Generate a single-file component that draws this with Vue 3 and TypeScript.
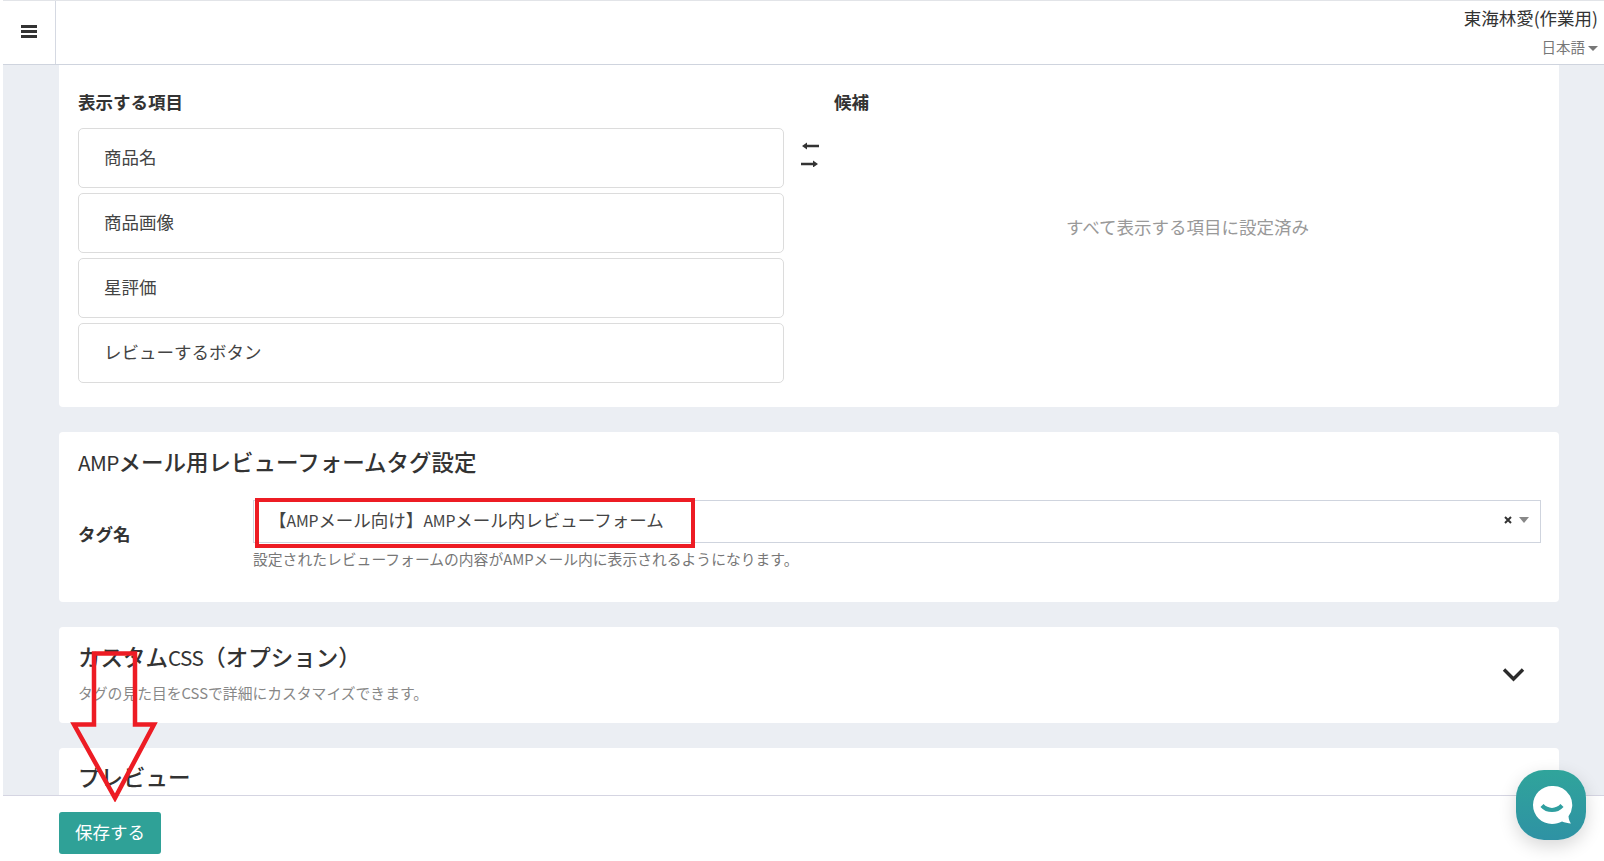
<script setup lang="ts">
const items: string[] = ['商品名', '商品画像', '星評価', 'レビューするボタン']
</script>

<template>
  <div class="page">
    <header class="topbar">
      <button class="menu" type="button" aria-label="menu">
        <svg width="16" height="13" viewBox="0 0 16 13"><path d="M0 0h16v3H0zM0 5h16v3H0zM0 10h16v3H0z" fill="#333" /></svg>
      </button>
      <div class="user">
        <div class="user-name">東海林愛(作業用)</div>
        <div class="lang">日本語<span class="caret"></span></div>
      </div>
    </header>

    <main class="content">
      <section class="card first">
        <div class="columns">
          <div>
            <h3 class="col-title">表示する項目</h3>
            <ul class="list">
              <li v-for="item in items" :key="item" class="list-item">{{ item }}</li>
            </ul>
          </div>
          <div class="swap">
            <svg width="19" height="26" viewBox="0 0 19 26">
              <path d="M18 3.800H6V1.500L1 5l5 3.500V6.200h12z" fill="#333" />
              <path d="M0 21.800h12v-2.300l5 3.500-5 3.500v-2.300H0z" fill="#333" />
            </svg>
          </div>
          <div class="candidates">
            <h3 class="col-title">候補</h3>
            <div class="empty">すべて表示する項目に設定済み</div>
          </div>
        </div>
      </section>

      <section class="card tag-card">
        <h2 class="card-title"><span class="latin-title">AMP</span>メール用レビューフォームタグ設定</h2>
        <div class="form-row">
          <label class="form-label">タグ名</label>
          <div class="form-field">
            <div class="select">
              <span class="select-value">【<span class="latin-value">AMP</span>メール向け】<span class="latin-value">AMP</span>メール内レビューフォーム</span>
              <svg class="select-clear" width="8" height="8" viewBox="0 0 8 8"><path d="M1 1l6 6M7 1L1 7" stroke="#333" stroke-width="2" /></svg>
              <span class="select-caret"></span>
            </div>
            <p class="help">設定されたレビューフォームの内容がAMPメール内に表示されるようになります。</p>
          </div>
        </div>
      </section>

      <section class="card css-card">
        <div>
          <h2 class="card-title">カスタム<span class="latin-title">CSS</span>（オプション）</h2>
          <p class="css-help">タグの見た目をCSSで詳細にカスタマイズできます。</p>
        </div>
        <svg class="chevron" width="23" height="15" viewBox="0 0 23 15">
          <path d="M2 2.500l9.500 9.500L21 2.500" fill="none" stroke="#2b2b2b" stroke-width="3.400" />
        </svg>
      </section>

      <section class="card preview-card">
        <h2 class="card-title">プレビュー</h2>
      </section>
    </main>

    <footer class="footer">
      <button class="save" type="button">保存する</button>
    </footer>

    <div class="mark-box"></div>
    <svg class="mark-arrow" width="90" height="152" viewBox="0 0 90 152">
      <path d="M25 3.500H66V74.500H85L46 148 5 74.500H25Z" fill="none" stroke="#ed1c24" stroke-width="4.500" />
    </svg>

    <div class="chat">
      <svg width="44" height="42" viewBox="0 0 44 42">
        <path d="M21 1a19 19 0 1 0 0 38c4 0 7-.9 10-2.400 2.500 1 6 1.900 9 1.900-1.500-2-2.300-4.300-2.500-7.200A19 19 0 0 0 21 1z" fill="#fff" />
        <path d="M11 20.500c5.500 6 14.500 6 20 0" fill="none" stroke="#2f9fa0" stroke-width="4.200" />
      </svg>
    </div>
  </div>
</template>

<style>
html, body { margin: 0; overflow: hidden; background: #fff; }
</style>

<style scoped>
* { box-sizing: border-box; }
.page {
  position: relative;
  height: 861px;
  display: flex;
  flex-direction: column;
  overflow: hidden;
  border-left: 3px solid #fff;
  font-family: "Noto Sans CJK JP", "Noto Sans", sans-serif;
  color: #333;
  background: #ebeef3;
}
.page::before {
  content: "";
  position: absolute;
  left: -1px;
  top: 0;
  bottom: 0;
  width: 1px;
  background: #d5d9e2;
}
.topbar {
  flex: none;
  height: 65px;
  display: flex;
  justify-content: space-between;
  background: #fff;
  border-top: 1px solid #e2e4e8;
  border-bottom: 1px solid #cfd4de;
}
.menu {
  width: 53px;
  padding: 0 0 2px;
  background: #fff;
  border: 0;
  border-right: 1px solid #d5d9e2;
  display: flex;
  align-items: center;
  justify-content: center;
}
.user {
  padding: 5px 6px 0 0;
  text-align: right;
}
.user-name { font-size: 17.500px; line-height: 24px; color: #333; }
.lang { margin-top: 7px; font-size: 14.500px; line-height: 20px; color: #777; }
.caret {
  display: inline-block;
  margin-left: 3px;
  vertical-align: 2px;
  border: 5px solid transparent;
  border-top: 5px solid #777;
  border-bottom: 0;
}
.content {
  flex: 1;
  min-height: 0;
  overflow: hidden;
  padding: 0 45px 0 56px;
  display: flex;
  flex-direction: column;
  gap: 25px;
}
.card {
  flex: none;
  background: #fff;
  border-radius: 4px;
  padding: 0 18px 0 19px;
}
.first { height: 342px; padding-top: 24px; border-radius: 0 0 4px 4px; }
.columns {
  display: grid;
  grid-template-columns: 706px 50px 707px;
}
.col-title {
  margin: 0 0 14px;
  font-size: 17.500px;
  line-height: 25px;
  font-weight: 700;
  color: #333;
}
.list { list-style: none; margin: 0; padding: 0; display: flex; flex-direction: column; gap: 5px; }
.list-item {
  height: 60px;
  padding: 0 0 4px 25px;
  display: flex;
  align-items: center;
  border: 1px solid #dcdcdc;
  border-radius: 5px;
  font-size: 17.500px;
  color: #444;
}
.swap { padding: 52px 0 0 16.500px; }
.candidates { display: flex; flex-direction: column; }
.empty {
  height: 196px;
  display: flex;
  align-items: center;
  justify-content: center;
  font-size: 17.500px;
  color: #999;
}
.tag-card { height: 170px; padding-top: 13px; }
.card-title {
  margin: 0;
  font-size: 22.500px;
  line-height: 32px;
  font-weight: 500;
  color: #333;
}
.latin-title {
  font-size: 0.92em;
  font-weight: 400;
  letter-spacing: -0.03em;
}
.latin-value {
  font-size: 0.9em;
  letter-spacing: -0.01em;
}
.form-row { display: flex; margin-top: 22px; }
.form-label {
  width: 175px;
  padding-top: 21px;
  font-size: 17.500px;
  line-height: 25px;
  font-weight: 700;
}
.form-field { flex: 1; min-width: 0; }
.select {
  height: 43px;
  display: flex;
  align-items: center;
  padding: 0 11px 4px 15px;
  border: 1px solid #cfd4de;
}
.select-value {
  flex: 1;
  font-size: 17.500px;
  color: #444;
}
.select-clear { margin-right: 7px; }
.select-caret {
  border: 5px solid transparent;
  border-top: 6px solid #888;
  border-bottom: 0;
}
.help {
  margin: 6px 0 0;
  font-size: 14.800px;
  line-height: 20px;
  color: #777;
}
.css-card {
  height: 96px;
  padding-top: 13px;
  padding-right: 34px;
  display: flex;
  justify-content: space-between;
}
.css-help {
  margin: 10px 0 0;
  font-size: 14.800px;
  line-height: 20px;
  color: #888;
}
.chevron { margin-top: 27px; }
.preview-card { height: 100px; padding-top: 12px; }
.footer {
  flex: none;
  height: 66px;
  padding: 16px 0 0 56px;
  background: #fff;
  border-top: 1px solid #d5d5e2;
}
.save {
  width: 102px;
  height: 42px;
  padding: 0 0 3px;
  border: 0;
  border-radius: 3px;
  background: #2fa197;
  color: #fff;
  font-family: inherit;
  font-size: 17.500px;
}
.mark-box {
  position: absolute;
  left: 252px;
  top: 498px;
  width: 440px;
  height: 50px;
  border: 4px solid #ed1c24;
}
.mark-arrow {
  position: absolute;
  left: 66px;
  top: 650px;
}
.chat {
  position: absolute;
  left: 1513px;
  top: 770px;
  width: 70px;
  height: 70px;
  border-radius: 28px;
  background: linear-gradient(#30a49b, #2e92a4);
  box-shadow: 0 6px 18px rgba(0, 0, 0, 0.16);
  display: flex;
  align-items: center;
  justify-content: center;
  padding: 2px 0 0 3px;
}
</style>
